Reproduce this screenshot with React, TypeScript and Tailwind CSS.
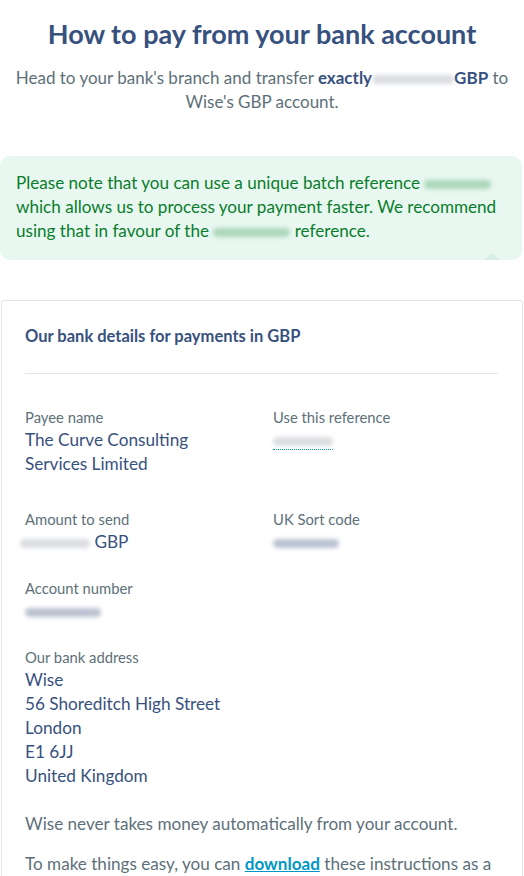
import React from "react";

function Blur({ w, tone = "gray", className = "" }: { w: number; tone?: "gray" | "green" | "blue"; className?: string }) {
  const bg =
    tone === "green"
      ? "bg-[#9dd0ae]"
      : tone === "blue"
      ? "bg-[#a9b3c6]"
      : "bg-[#d2d5da]";
  return (
    <span
      className={`inline-block h-[9px] align-middle rounded-full blur-[2px] opacity-80 ${bg} ${className}`}
      style={{ width: w }}
    />
  );
}

function Field({ label, children, className = "" }: { label: string; children: React.ReactNode; className?: string }) {
  return (
    <div className={className}>
      <div className="text-[14.8px] leading-[22px] text-[#5d7079]">{label}</div>
      <div className="text-[17.2px] leading-[24px] text-[#37517e]">{children}</div>
    </div>
  );
}

export default function App() {
  return (
    <div className="min-h-screen bg-white font-['Lato',sans-serif] text-[#5d7079]">
      <div className="pt-4 text-center">
        <h1 className="text-[27px] leading-[36px] font-bold text-[#37517e]">How to pay from your bank account</h1>
        <p className="mt-[14px] px-3 text-[17px] leading-[24px]">
          Head to your bank's branch and transfer <b className="text-[#37517e]">exactly</b>
          <Blur w={82} />
          <b className="text-[#37517e]">GBP</b> to Wise's GBP account.
        </p>
      </div>

      <div className="relative mt-[42px] mr-[2px] rounded-[10px] bg-[#e8f7f0] px-4 pt-[15px] pb-[17px] text-[17.1px] leading-[24px] text-[#0a7d2c]">
        Please note that you can use a unique batch reference <Blur w={67} tone="green" /> which allows us to process your payment faster. We recommend using that in favour of the <Blur w={77} tone="green" /> reference.
        <span className="absolute bottom-0 right-[22px] h-0 w-0 border-x-[8px] border-b-[7px] border-x-transparent border-b-[#d6f0e6]" />
      </div>

      <div className="mx-[1px] mt-[40px] rounded-[3px] border border-[#e2e6e8] pl-[23px] pr-6 pt-[23px] pb-8">
        <h2 className="text-[16.5px] leading-[24px] font-bold text-[#37517e]">Our bank details for payments in GBP</h2>
        <div className="mt-[25px] h-px bg-[#e2e6e8]" />

        <div className="mt-[32px] grid grid-cols-[248px_1fr]">
          <Field label="Payee name">
            The Curve Consulting
            <br />
            Services Limited
          </Field>
          <Field label="Use this reference">
            <span className="inline-block border-b border-dotted border-[#0097c7] leading-[18px]">
              <Blur w={60} />
            </span>
          </Field>

          <Field label="Amount to send" className="mt-[32px]">
            <Blur w={70} className="-ml-[5px]" /> GBP
          </Field>
          <Field label="UK Sort code" className="mt-[32px]">
            <Blur w={66} tone="blue" />
          </Field>

          <Field label="Account number" className="mt-[23px] col-span-2">
            <Blur w={76} tone="blue" />
          </Field>

          <Field label="Our bank address" className="mt-[23px] col-span-2">
            Wise
            <br />
            56 Shoreditch High Street
            <br />
            London
            <br />
            E1 6JJ
            <br />
            United Kingdom
          </Field>
        </div>

        <p className="mt-6 text-[17.1px] leading-[24px]">Wise never takes money automatically from your account.</p>
        <p className="mt-4 text-[17.1px] leading-[24px]">
          To make things easy, you can{" "}
          <a href="#" className="font-bold text-[#0097c7] underline">
            download
          </a>{" "}
          these instructions as a PDF.
        </p>
      </div>
    </div>
  );
}
